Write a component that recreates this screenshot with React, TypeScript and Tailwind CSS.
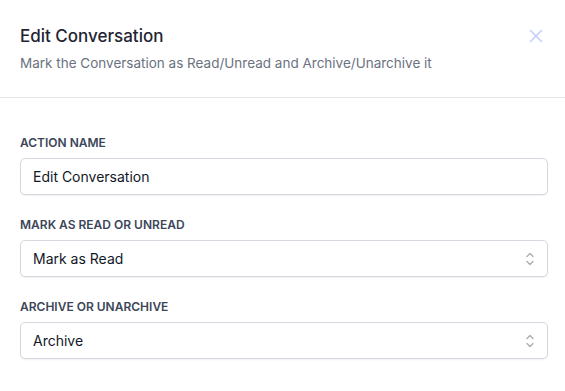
import React from "react";

// Form fields for the edit conversation action
const FIELDS = [
    { label: "Action name", value: "Edit Conversation", select: false },
    { label: "Mark as read or unread", value: "Mark as Read", select: true },
    { label: "Archive or unarchive", value: "Archive", select: true },
];

function CloseIcon() {
    return (
        <svg width="16" height="16" viewBox="0 0 16 16" fill="none" stroke="currentColor" strokeWidth="1.5" strokeLinecap="round">
            <path d="M2.5 2.5l11 11M13.5 2.5l-11 11" />
        </svg>
    );
}

function SortIcon() {
    return (
        <svg width="10" height="16" viewBox="0 0 10 16" fill="none" stroke="currentColor" strokeWidth="1.2" strokeLinecap="round" strokeLinejoin="round">
            <path d="M2 5.5l3-3 3 3M2 10.5l3 3 3-3" />
        </svg>
    );
}

export default function App() {
    return (
        <div className="w-[565px] h-[391px] bg-white overflow-hidden" style={{ fontFamily: "Inter, 'Noto Sans', sans-serif" }}>
            {/* Header */}
            <div className="flex items-start justify-between pl-5 pr-[20px] pt-[24px] pb-[24px] border-b border-gray-200">
                <div className="flex flex-col">
                    <h2 className="text-[17px] leading-6 font-medium text-[#1f2433]">Edit Conversation</h2>
                    <p className="mt-[5px] text-[13.5px] leading-5 text-[#6b7280]">
                        Mark the Conversation as Read/Unread and Archive/Unarchive it
                    </p>
                </div>
                <button type="button" className="mt-[4px] mr-[1px] text-[#c3cdfb]" aria-label="Close">
                    <CloseIcon />
                </button>
            </div>

            {/* Body */}
            <div className="flex flex-col gap-[22px] pl-5 pr-[17px] pt-[37px]">
                {FIELDS.map(f => (
                    <div key={f.label} className="flex flex-col gap-[7px]">
                        <label className="text-[12px] leading-4 font-semibold uppercase tracking-normal text-[#3c4658]">
                            {f.label}
                        </label>
                        <div className="flex items-center justify-between h-[37px] px-3 rounded-[5px] border border-[#d5d8de] bg-white shadow-[0_1px_2px_rgba(0,0,0,0.06)]">
                            <span className="text-[14px] text-[#111827]">{f.value}</span>
                            {f.select && (
                                <span className="text-[#a3a8b3] mr-0">
                                    <SortIcon />
                                </span>
                            )}
                        </div>
                    </div>
                ))}
            </div>
        </div>
    );
}
